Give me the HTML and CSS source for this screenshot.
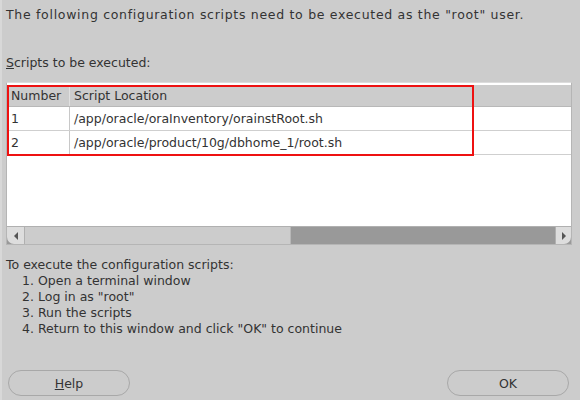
FILE: index.html
```html
<!DOCTYPE html>
<html>
<head>
<meta charset="utf-8">
<link rel="stylesheet" href="styles.css">
</head>
<body>
<div class="dialog">
  <p class="intro">The following configuration scripts need to be executed as the "root" user.</p>
  <p class="label"><span class="mn">S</span>cripts to be executed:</p>
  <div class="panel">
    <div class="grid">
      <div class="row head">
        <div class="c1">Number</div>
        <div class="c2">Script Location</div>
      </div>
      <div class="row">
        <div class="c1">1</div>
        <div class="c2">/app/oracle/oraInventory/orainstRoot.sh</div>
      </div>
      <div class="row">
        <div class="c1">2</div>
        <div class="c2">/app/oracle/product/10g/dbhome_1/root.sh</div>
      </div>
      <div class="highlight"></div>
    </div>
    <div class="hscroll">
      <div class="btn-l"><svg width="6" height="8" viewBox="0 0 6 8"><path d="M5 0 L1 4 L5 8 Z" fill="#555"/></svg></div>
      <div class="thumb"></div>
      <div class="track"></div>
      <div class="btn-r"><svg width="6" height="8" viewBox="0 0 6 8"><path d="M1 0 L5 4 L1 8 Z" fill="#555"/></svg></div>
    </div>
  </div>
  <div class="steps">
    <p>To execute the configuration scripts:</p>
    <ol>
      <li>Open a terminal window</li>
      <li>Log in as "root"</li>
      <li>Run the scripts</li>
      <li>Return to this window and click "OK" to continue</li>
    </ol>
  </div>
  <div class="buttons">
    <button class="pill"><span class="mn">H</span>elp</button>
    <button class="pill">OK</button>
  </div>
</div>
</body>
</html>
```
FILE: styles.css
```css
html, body {
  margin: 0;
  padding: 0;
  background: #cccccc;
}
body {
  width: 580px;
  height: 400px;
  overflow: hidden;
  font-family: "DejaVu Sans", sans-serif;
  font-size: 12.5px;
  color: #333333;
}
.dialog {
  display: flex;
  flex-direction: column;
  height: 400px;
  padding: 0 8px 0 4px;
  box-sizing: border-box;
  border-left: 2px solid #d8d8d8;
}
p { margin: 0; }
.intro {
  line-height: 16px;
  margin-top: 7px;
  letter-spacing: 0.7px;
}
.label {
  line-height: 16px;
  margin-top: 32px;
}
.mn { text-decoration: underline; }
.panel {
  margin-top: 11px;
  height: 161px;
  border: 1px solid #b5b5b5;
  border-top-color: #dcdcdc;
  background: #ffffff;
  display: flex;
  flex-direction: column;
}
.grid {
  flex: 1;
  position: relative;
  padding-top: 2px;
}
.row {
  display: flex;
  height: 23px;
  line-height: 23px;
  border-bottom: 1px solid #cfcfcf;
}
.row.head {
  background: #cccccc;
  height: 21px;
  line-height: 21px;
  border-bottom: 1px solid #b8b8b8;
}
.c1 {
  width: 58px;
  padding-left: 4px;
  border-right: 1px solid #c8c8c8;
}
.head .c1 { border-right-color: #e0e0e0; }
.c2 {
  padding-left: 4px;
  flex: 1;
}
.highlight {
  position: absolute;
  left: 0px;
  top: 2px;
  width: 463px;
  height: 67px;
  border: 2px solid #ee1111;
}
.hscroll {
  height: 17px;
  display: flex;
  background: #999999;
  border-top: 1px solid #b0b0b0;
}
.btn-l, .btn-r {
  width: 17px;
  background: #dddddd;
  display: flex;
  align-items: center;
  justify-content: center;
}
.btn-l { border-radius: 0 0 0 7px; border-right: 1px solid #b0b0b0; }
.btn-r { width: 15px; border-radius: 0 0 7px 0; border-left: 1px solid #b0b0b0; }
.thumb {
  width: 265px;
  background: #cccccc;
  border-right: 1px solid #b8b8b8;
}
.track { flex: 1; }
.steps {
  margin-top: 12px;
  line-height: 16px;
}
.steps ol {
  margin: 0;
  padding-left: 32px;
}
.buttons {
  margin-top: auto;
  margin-bottom: 4px;
  display: flex;
  justify-content: space-between;
}
.pill {
  width: 122px;
  height: 26px;
  border: 1px solid #a8a8a8;
  border-radius: 13px;
  background: #cccccc;
  font-family: "DejaVu Sans", sans-serif;
  font-size: 12.5px;
  color: #333333;
  padding: 0;
}
.buttons .pill:first-child { margin-left: 2px; }
.buttons .pill:last-child { margin-right: 3px; }
```
